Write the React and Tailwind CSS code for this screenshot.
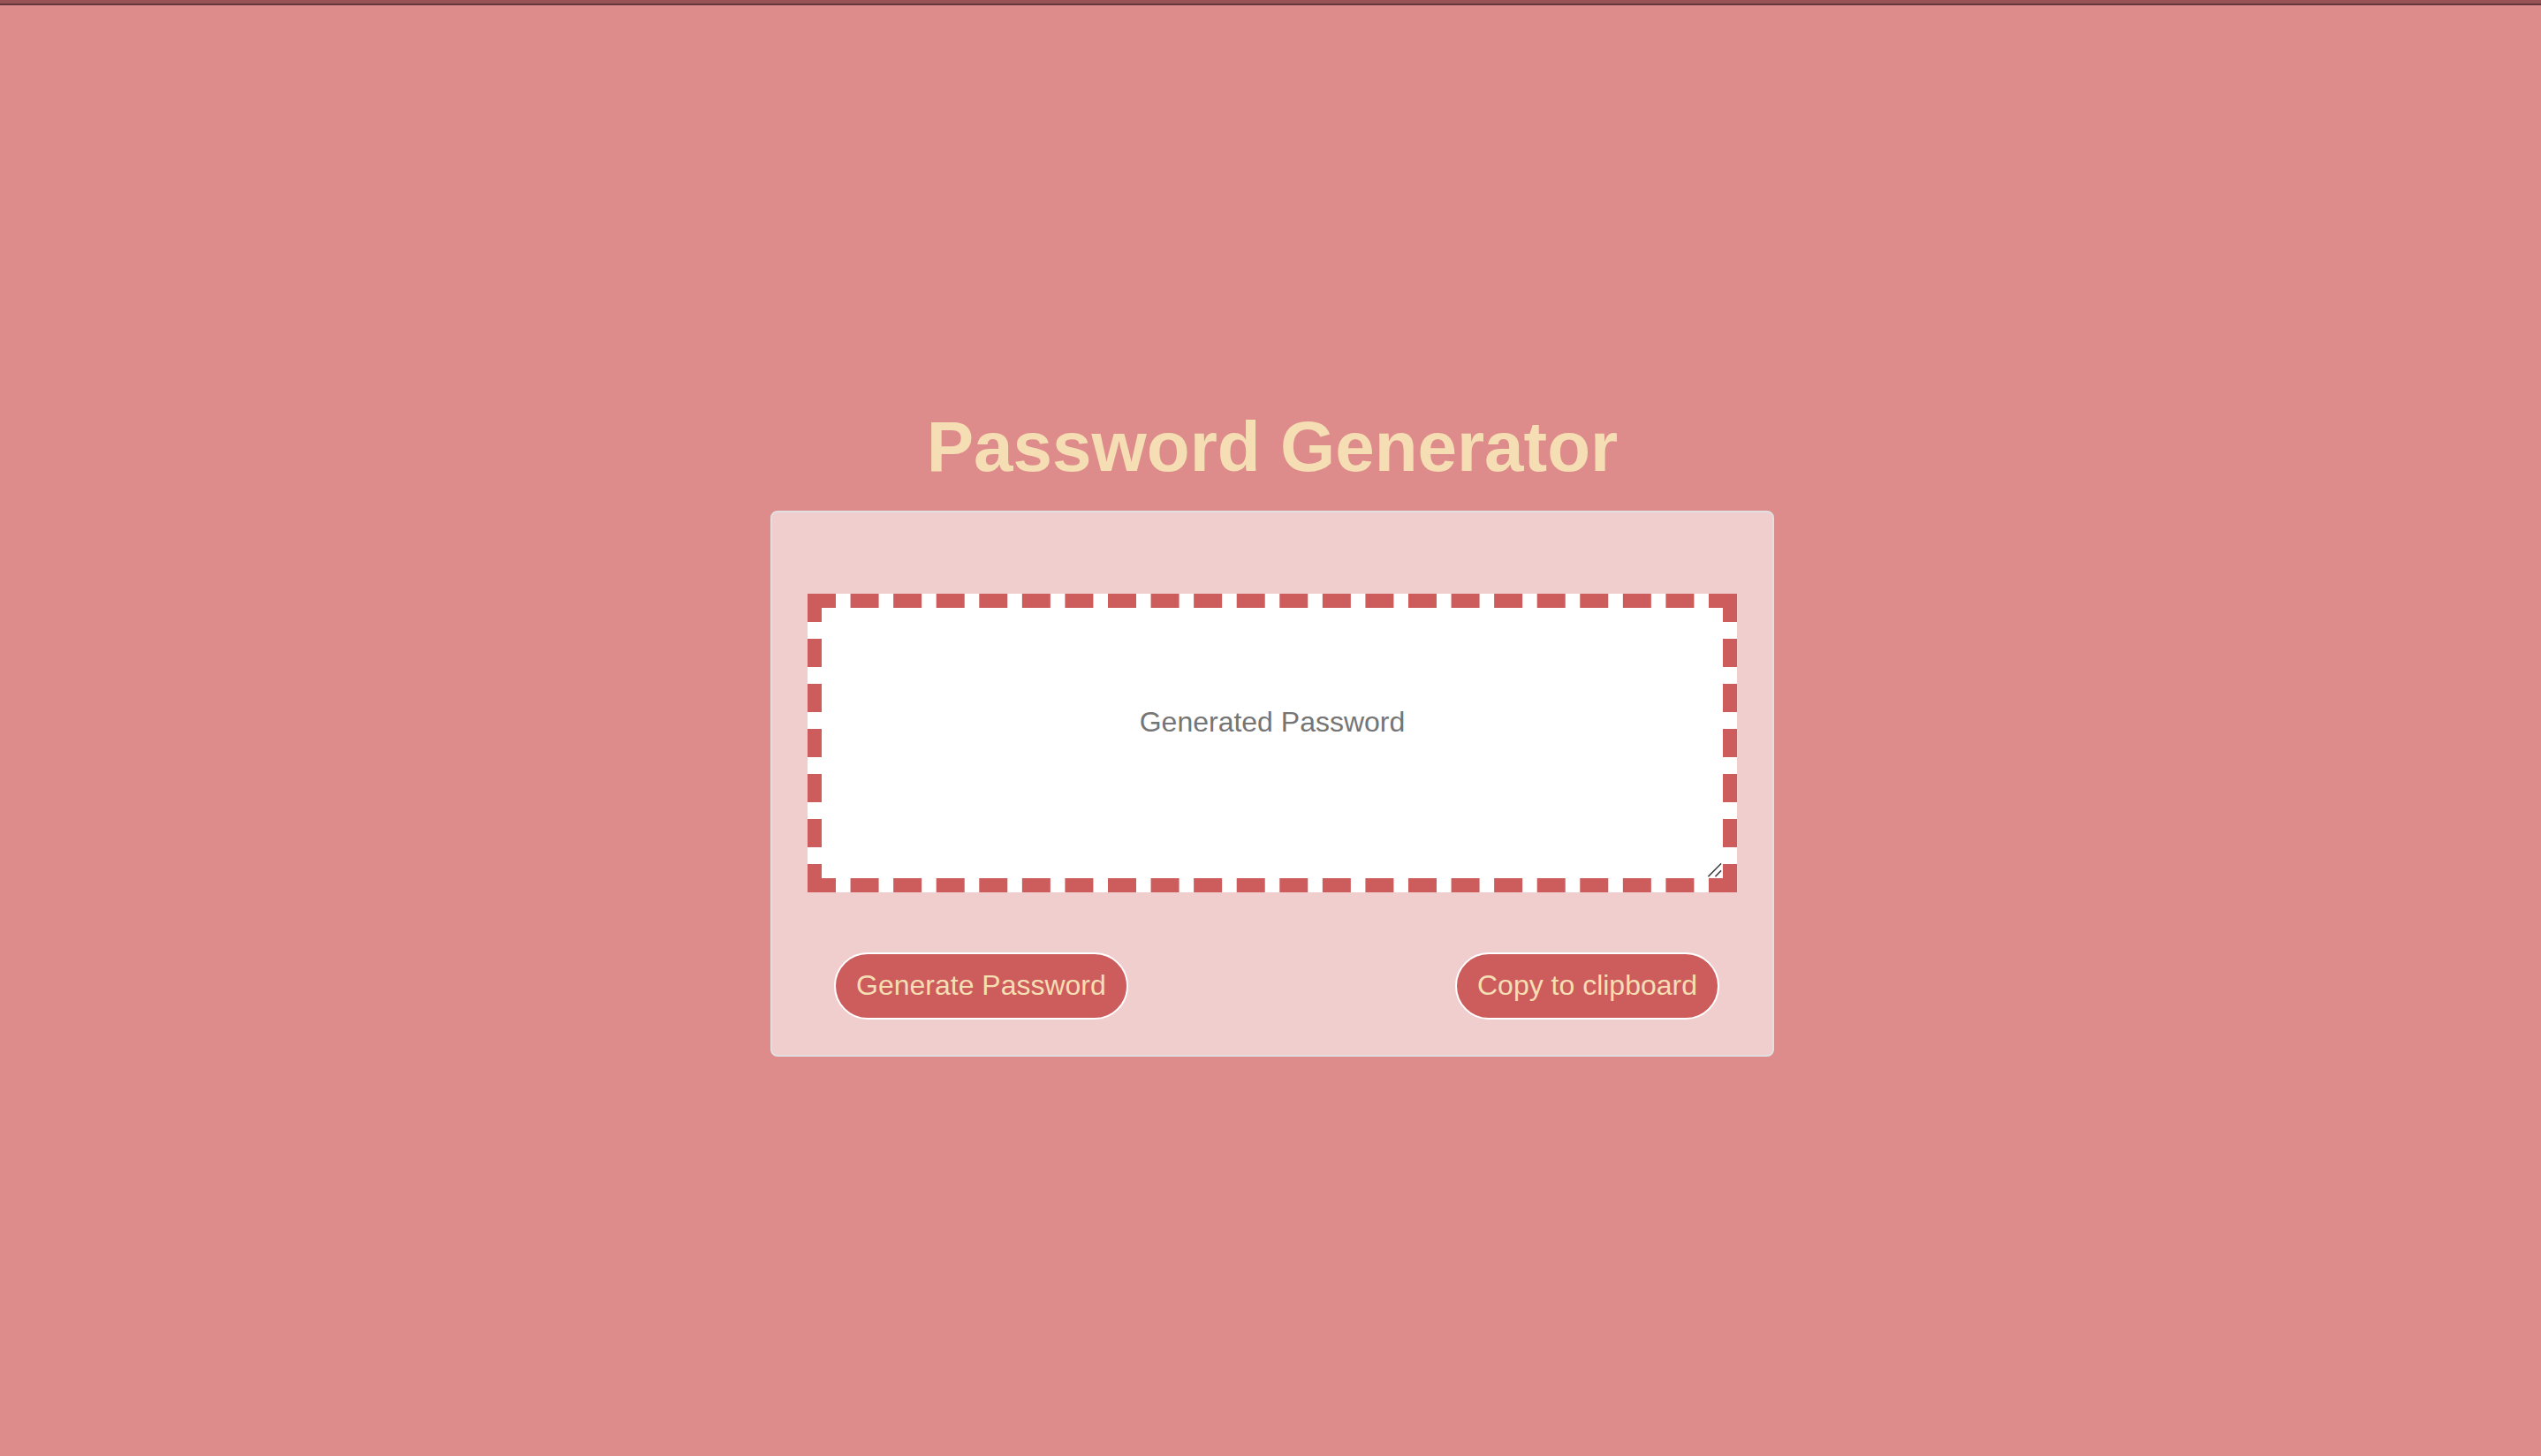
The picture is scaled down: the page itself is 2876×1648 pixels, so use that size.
import { useState } from "react";

const CHARACTERS =
  "abcdefghijklmnopqrstuvwxyzABCDEFGHIJKLMNOPQRSTUVWXYZ0123456789!@#$%^&*";

function createPassword(length = 16) {
  const values = crypto.getRandomValues(new Uint32Array(length));
  return Array.from(values, (v) => CHARACTERS[v % CHARACTERS.length]).join("");
}

function PillButton({ children, onClick }) {
  return (
    <button
      type="button"
      onClick={onClick}
      className="cursor-pointer rounded-full border-2 border-white bg-[#cd5c5c] px-[23px] pt-[15px] pb-[17px] text-[32px] leading-10 text-[#f5deb3]"
    >
      {children}
    </button>
  );
}

export default function App() {
  const [password, setPassword] = useState("");

  return (
    <div className="flex min-h-screen flex-col bg-[#dd8b8b] font-['Liberation_Sans',Arial,sans-serif]">
      <div className="h-1.5 border-b-2 border-[#65363b] bg-[#985454]" />
      <main className="flex flex-1 flex-col items-center justify-center pl-1">
        <h1 className="mb-6 text-[80px] leading-24 font-bold text-[#f5deb3]">
          Password Generator
        </h1>
        <section className="w-full max-w-[1136px] rounded-lg border-2 border-[#e0e0e0] bg-[#f0cece] px-10 pt-[92px] pb-10">
          <div className="relative">
            <textarea
              aria-label="Generated Password"
              placeholder="Generated Password"
              readOnly
              value={password}
              className="block h-[338px] w-full resize-none border-16 border-dashed border-[#cd5c5c] bg-white pt-[111px] text-center text-[32px] leading-9 text-[#757575] placeholder:text-[#757575]"
            />
            {/* Resize grip in the inner corner of the text box */}
            <svg
              aria-hidden="true"
              viewBox="0 0 20 20"
              className="pointer-events-none absolute right-4 bottom-4 size-5"
              stroke="#454545"
              strokeWidth="1.6"
              strokeLinecap="square"
            >
              <path d="M4 17.5 17.5 4M12 17.5 17.5 12" />
            </svg>
          </div>
          <div className="mt-[68px] flex justify-between pr-5 pl-[30px]">
            <PillButton onClick={() => setPassword(createPassword())}>
              Generate Password
            </PillButton>
            <PillButton
              onClick={() => navigator.clipboard?.writeText(password)}
            >
              Copy to clipboard
            </PillButton>
          </div>
        </section>
      </main>
    </div>
  );
}
